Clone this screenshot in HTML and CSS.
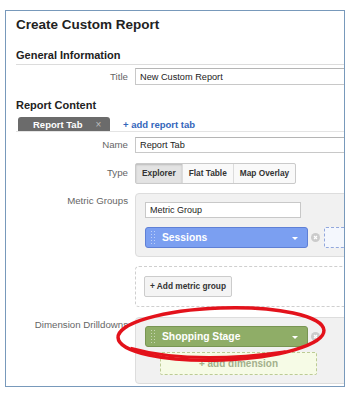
FILE: index.html
```html
<!DOCTYPE html>
<html lang="en">
<head>
    <meta charset="UTF-8">
    <meta name="viewport" content="width=device-width, initial-scale=1.0">
    <title>Create Custom Report</title>
    <link rel="stylesheet" href="styles.css">
</head>
<body>
    <div class="panel">
        <h1 class="page-title">Create Custom Report</h1>

        <h2 class="section-title section-title--line">General Information</h2>
        <div class="row row--first">
            <label class="row-label">Title</label>
            <div class="row-field"><input class="text-input" type="text" value="New Custom Report"></div>
        </div>

        <h2 class="section-title section-title--gap">Report Content</h2>
        <div class="tabs">
            <span class="tab">Report Tab <span class="tab-close">&times;</span></span>
            <a class="add-link">+ add report tab</a>
        </div>

        <div class="row row--name">
            <label class="row-label">Name</label>
            <div class="row-field"><input class="text-input text-input--short" type="text" value="Report Tab"></div>
        </div>

        <div class="row">
            <label class="row-label row-label--tall">Type</label>
            <div class="row-field">
                <div class="seg">
                    <span class="seg-btn is-active">Explorer</span>
                    <span class="seg-btn">Flat Table</span>
                    <span class="seg-btn">Map Overlay</span>
                </div>
            </div>
        </div>

        <div class="row">
            <label class="row-label row-label--top">Metric Groups</label>
            <div class="row-field">
                <div class="group-box">
                    <input class="group-name" type="text" value="Metric Group">
                    <div class="pill-row">
                        <div class="pill pill--metric">
                            <svg class="grip" width="4" height="13" viewBox="0 0 4 13">
                                <g fill="#fff" opacity=".5">
                                    <rect x="0" y="0" width="1" height="1"/><rect x="3" y="0" width="1" height="1"/>
                                    <rect x="0" y="3" width="1" height="1"/><rect x="3" y="3" width="1" height="1"/>
                                    <rect x="0" y="6" width="1" height="1"/><rect x="3" y="6" width="1" height="1"/>
                                    <rect x="0" y="9" width="1" height="1"/><rect x="3" y="9" width="1" height="1"/>
                                    <rect x="0" y="12" width="1" height="1"/><rect x="3" y="12" width="1" height="1"/>
                                </g>
                            </svg>
                            <span class="pill-text">Sessions</span>
                            <span class="pill-caret"></span>
                        </div>
                        <svg class="remove" width="9" height="9" viewBox="0 0 9 9">
                            <circle cx="4.5" cy="4.5" r="4.5" fill="#cbcbcb"/>
                            <path d="M3 3l3 3M6 3l-3 3" stroke="#fff" stroke-width="1.2"/>
                        </svg>
                        <div class="drop-zone"></div>
                    </div>
                </div>
            </div>
        </div>

        <div class="row">
            <span class="row-label"></span>
            <div class="row-field">
                <div class="add-box">
                    <span class="btn">+ Add metric group</span>
                </div>
            </div>
        </div>

        <div class="row row--dims">
            <label class="row-label row-label--top">Dimension Drilldowns</label>
            <div class="row-field">
                <div class="group-box">
                    <div class="pill-row pill-row--flush">
                        <div class="pill pill--dim">
                            <svg class="grip" width="4" height="13" viewBox="0 0 4 13">
                                <g fill="#fff" opacity=".5">
                                    <rect x="0" y="0" width="1" height="1"/><rect x="3" y="0" width="1" height="1"/>
                                    <rect x="0" y="3" width="1" height="1"/><rect x="3" y="3" width="1" height="1"/>
                                    <rect x="0" y="6" width="1" height="1"/><rect x="3" y="6" width="1" height="1"/>
                                    <rect x="0" y="9" width="1" height="1"/><rect x="3" y="9" width="1" height="1"/>
                                    <rect x="0" y="12" width="1" height="1"/><rect x="3" y="12" width="1" height="1"/>
                                </g>
                            </svg>
                            <span class="pill-text">Shopping Stage</span>
                            <span class="pill-caret"></span>
                        </div>
                        <svg class="remove" width="9" height="9" viewBox="0 0 9 9">
                            <circle cx="4.5" cy="4.5" r="4.5" fill="#cbcbcb"/>
                            <path d="M3 3l3 3M6 3l-3 3" stroke="#fff" stroke-width="1.2"/>
                        </svg>
                    </div>
                    <div class="add-dim">+ add dimension</div>
                </div>
            </div>
        </div>
    </div>

    <!-- hand-drawn highlight over the dimension pill, heavier along the bottom -->
    <svg class="annotation" width="350" height="394" viewBox="0 0 350 394">
        <g transform="rotate(-2 221 334)" fill="none" stroke="#e3121b">
            <ellipse cx="221" cy="334" rx="103" ry="26" stroke-width="3.5"/>
            <path d="M130 345 Q 190 364 285 354" stroke-width="3"/>
        </g>
    </svg>
</body>
</html>
```

FILE: styles.css
```css
body {
    margin: 0;
    font-family: "Liberation Sans", Arial, sans-serif;
    background-color: #fff;
    color: #222;
}
.panel {
    position: relative;
    width: 340px;
    height: 377px;
    margin: 10px 0 0 5px;
    border: 1px solid #7899bb;
    box-sizing: border-box;
    overflow: hidden;
    background-color: #fff;
}
.page-title {
    margin: 0;
    padding: 6px 10px 0;
    font-size: 13.5px;
    line-height: 16px;
    font-weight: bold;
}
.section-title {
    margin: 15px 0 0 10px;
    font-size: 11px;
    line-height: 14px;
    font-weight: bold;
}
.section-title--line {
    padding-bottom: 2px;
    border-bottom: 1px solid #dcdcdc;
}
.section-title--gap {
    margin-top: 13px;
}
.row {
    display: grid;
    grid-template-columns: 122px 1fr;
    column-gap: 7px;
    width: 420px;
    margin-top: 9px;
}
.row--first {
    margin-top: 3px;
}
.row--name {
    margin-top: 5px;
}
.row--dims {
    margin-top: 10px;
}
.row-label {
    text-align: right;
    font-size: 9.7px;
    line-height: 16px;
    color: #666;
}
.row--first .row-label {
    line-height: 17px;
}
.row-label--tall {
    line-height: 21px;
}
.row-label--top {
    padding-top: 2px;
    line-height: 12px;
    white-space: nowrap;
}
.text-input {
    display: block;
    width: 100%;
    height: 17px;
    margin: 0;
    padding: 0 4px;
    box-sizing: border-box;
    border: 1px solid #c8c8c8;
    border-top-color: #b5b5b5;
    font-family: inherit;
    font-size: 9.2px;
    color: #222;
    background-color: #fff;
}
.text-input--short {
    height: 16px;
}
.tabs {
    display: flex;
    align-items: center;
    height: 14px;
    margin: 5px 0 0 10px;
    padding-left: 2px;
    border-bottom: 1px solid #e4e4e4;
}
.tab {
    display: flex;
    align-items: center;
    gap: 13px;
    width: 92px;
    height: 14px;
    padding-left: 15px;
    box-sizing: border-box;
    border-radius: 3px 3px 0 0;
    background-color: #6b6b6b;
    color: #fff;
    font-size: 9.5px;
    font-weight: bold;
}
.tab-close {
    color: #bdbdbd;
    font-weight: normal;
    font-size: 10px;
}
.add-link {
    margin-left: 13px;
    color: #3366bb;
    font-size: 9.5px;
    font-weight: bold;
}
.seg {
    display: inline-flex;
    height: 21px;
    box-sizing: border-box;
    border: 1px solid #cacaca;
    border-radius: 2px;
    background-color: #f9f9f9;
}
.seg-btn {
    padding: 0 6px;
    font-size: 8.3px;
    font-weight: bold;
    line-height: 19px;
    color: #333;
    border-left: 1px solid #dcdcdc;
}
.seg-btn:first-child {
    border-left: none;
}
.seg-btn.is-active {
    background-color: #e3e3e3;
    box-shadow: inset 0 1px 2px rgba(0,0,0,0.18);
}
.group-box {
    padding: 8px 9px;
    border: 1px solid #dddddd;
    border-radius: 4px;
    background-color: #f1f1f1;
}
.group-name {
    display: block;
    width: 156px;
    height: 16px;
    margin: 0;
    padding: 0 4px;
    box-sizing: border-box;
    border: 1px solid #c8c8c8;
    font-family: inherit;
    font-size: 9px;
    color: #222;
    background-color: #fff;
}
.pill-row {
    display: flex;
    align-items: center;
    margin-top: 9px;
}
.pill-row--flush {
    margin-top: 0;
}
.pill {
    display: flex;
    align-items: center;
    width: 163px;
    height: 21px;
    padding: 0 9px 0 5px;
    box-sizing: border-box;
    border: 1px solid;
    border-radius: 3px;
    color: #fff;
}
.pill--metric {
    background-color: #7b9ff1;
    border-color: #5f80d6;
}
.pill--dim {
    background-color: #8fad67;
    border-color: #789553;
}
.grip {
    flex: none;
}
.pill-text {
    flex: 1;
    margin-left: 7px;
    font-size: 10.3px;
    font-weight: bold;
}
.pill-caret {
    width: 0;
    height: 0;
    margin-top: 2px;
    border-left: 3px solid transparent;
    border-right: 3px solid transparent;
    border-top: 3px solid #fff;
}
.remove {
    flex: none;
    margin-left: 3px;
}
.drop-zone {
    flex: 1;
    height: 21px;
    margin-left: 4px;
    box-sizing: border-box;
    border: 1px dashed #93a8dc;
    border-radius: 2px;
    background-color: #f4f7fd;
}
.add-box {
    padding: 8px 8px 9px;
    border: 1px dashed #cfcfcf;
    border-radius: 4px;
}
.btn {
    display: inline-block;
    height: 21px;
    padding: 0 5px;
    box-sizing: border-box;
    border: 1px solid #cccccc;
    border-radius: 2px;
    background-color: #f4f4f4;
    font-size: 8.3px;
    font-weight: bold;
    line-height: 19px;
    color: #333;
}
.add-dim {
    width: 157px;
    height: 23px;
    margin: 5px 0 0 15px;
    box-sizing: border-box;
    border: 1px dashed #bccb95;
    border-radius: 2px;
    background-color: #f6fbe6;
    text-align: center;
    font-size: 10px;
    font-weight: bold;
    line-height: 21px;
    color: #a3b08c;
}
.annotation {
    position: absolute;
    top: 0;
    left: 0;
    pointer-events: none;
}
```
